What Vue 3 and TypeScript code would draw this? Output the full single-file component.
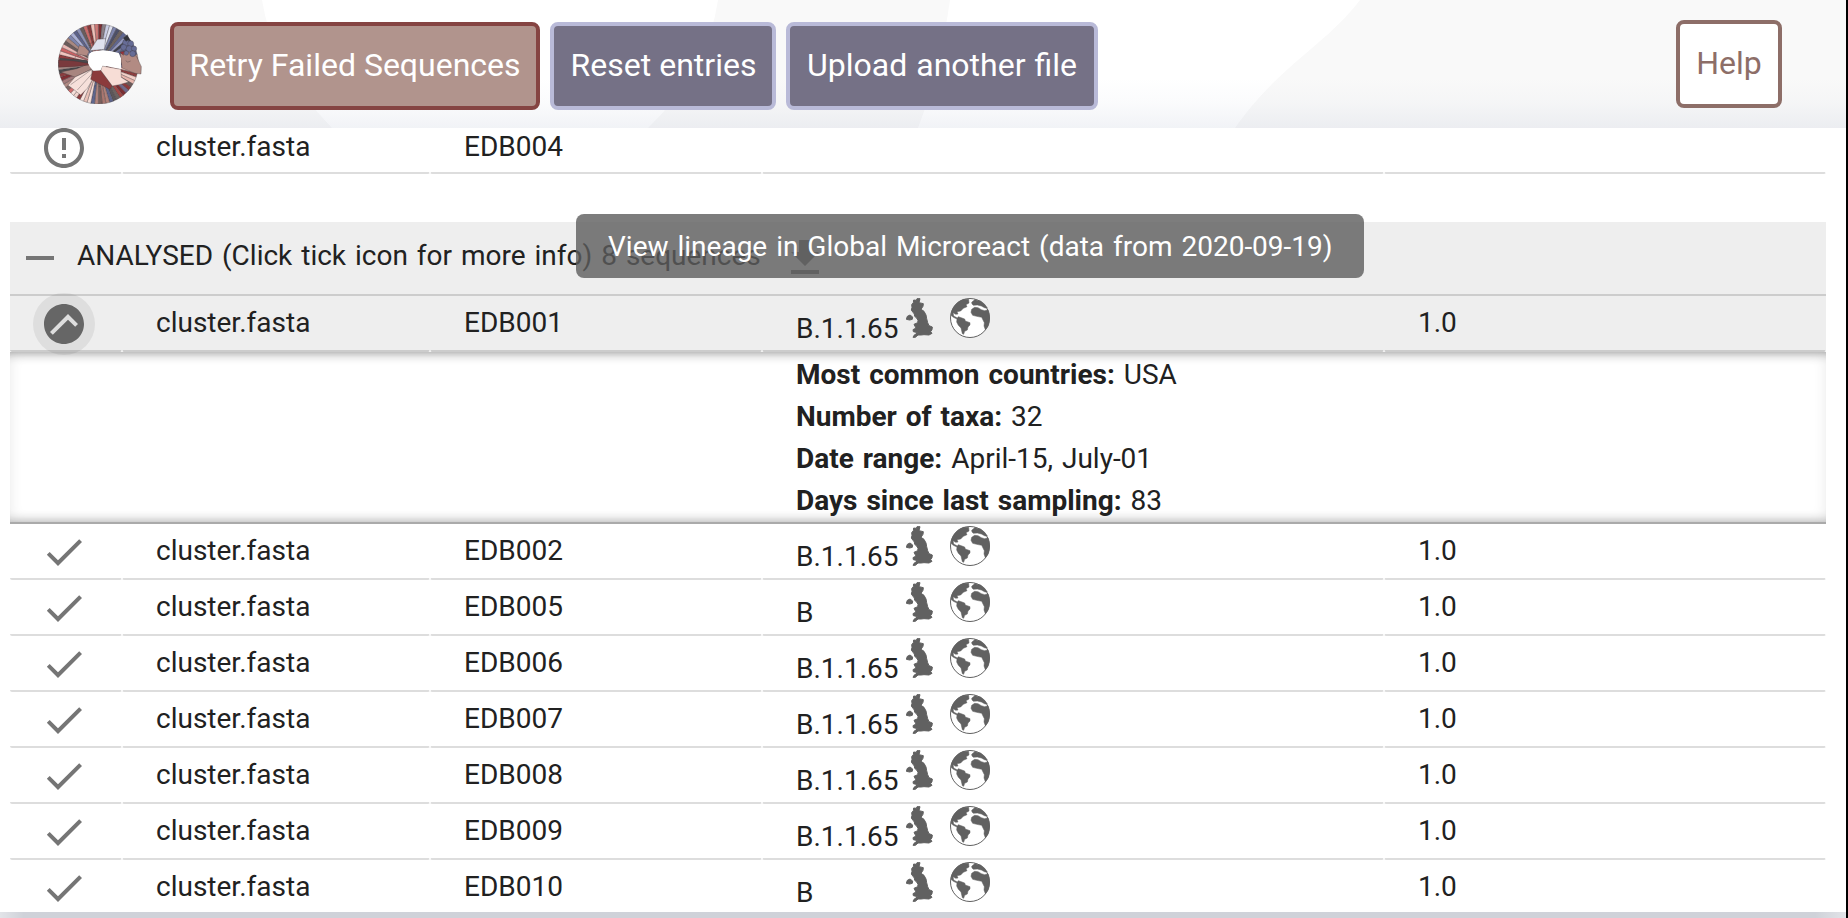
<script setup lang="ts">
interface Row {
  id: string
  lineage: string
  open?: boolean
}

const rows: Row[] = [
  { id: 'EDB001', lineage: 'B.1.1.65', open: true },
  { id: 'EDB002', lineage: 'B.1.1.65' },
  { id: 'EDB005', lineage: 'B' },
  { id: 'EDB006', lineage: 'B.1.1.65' },
  { id: 'EDB007', lineage: 'B.1.1.65' },
  { id: 'EDB008', lineage: 'B.1.1.65' },
  { id: 'EDB009', lineage: 'B.1.1.65' },
  { id: 'EDB010', lineage: 'B' },
]

const details = [
  { label: 'Most common countries:', value: 'USA' },
  { label: 'Number of taxa:', value: '32' },
  { label: 'Date range:', value: 'April-15, July-01' },
  { label: 'Days since last sampling:', value: '83' },
]

// Logo spokes: clockwise from twelve o'clock, [colour, inner radius]
const spokes: [string, number][] = [
  ['#7d2f33', 42], ['#8a7f86', 70], ['#c9cde4', 42], ['#dfe2f0', 42], ['#7f86ad', 44], ['#4d5068', 48],
  ['#6f6460', 50], ['#5f6690', 50], ['#9298c0', 55], ['#3c3f4c', 55], ['#6d739c', 55], ['#5d6389', 55],
  ['#767ca6', 60], ['#50557a', 60], ['#b38f87', 60], ['#b38f87', 60], ['#565b7c', 60], ['#8a8fb5', 60],
  ['#ecc3bb', 62], ['#8b3f40', 60], ['#f3d0c8', 52], ['#e8b7ae', 55], ['#6a5a5a', 60], ['#8b3a3c', 62],
  ['#70688a', 66], ['#7b2e33', 60], ['#a24645', 48], ['#6c6260', 60], ['#5c5659', 66], ['#5e648c', 70],
  ['#b08078', 60], ['#a9766f', 56], ['#7a5f5c', 68], ['#b38780', 60], ['#5f668e', 66], ['#f6ddd6', 40],
  ['#e9c1b8', 40], ['#f7e3de', 40], ['#8b3b3d', 74], ['#f3d4cd', 40], ['#f6dfd9', 40], ['#cf6d6c', 78],
  ['#7e6663', 50], ['#b08a83', 44], ['#a4797a', 40], ['#812f34', 60], ['#8c3d3f', 66], ['#4a4a4d', 40],
  ['#b0908a', 40], ['#7f6a67', 66], ['#c66a6a', 78], ['#8f3c3f', 62], ['#f1c4bf', 72], ['#c96365', 66],
  ['#e9b9b5', 60], ['#6b5b5a', 60], ['#a98880', 44], ['#7d84ac', 60], ['#a9afd4', 56], ['#5c628a', 60],
  ['#8c92b8', 56], ['#6a5c5b', 62], ['#c96a69', 66], ['#8a3a3c', 68], ['#efc0b8', 66], ['#cf7a78', 68],
]

function spokePath(i: number): string {
  const step = (Math.PI * 2) / spokes.length
  const a = i * step - Math.PI / 2
  const b = a + step
  const inner = spokes[i][1]
  const pt = (ang: number, r: number) => `${(175 + Math.cos(ang) * r).toFixed(1)} ${(162 + Math.sin(ang) * r).toFixed(1)}`
  return `M${pt(a, 25)}L${pt(a, 120)}A120 120 0 0 1 ${pt(b, 120)}L${pt(b, 25)}ZM${pt(a, inner)}L${pt(b, inner)}`
}
</script>

<template>
  <div class="page">
    <header class="bar">
      <svg class="backdrop" viewBox="0 0 1846 128" aria-hidden="true">
        <path d="M0 0H262Q272 66 332 128H0Z" />
        <path d="M718 0H950Q940 70 918 128H648Q708 70 718 0Z" />
        <path d="M1360 0H1846V128H1235C1280 64 1325 46 1360 0Z" />
      </svg>
      <svg class="logo" viewBox="54 42 252 240" aria-hidden="true">
        <g stroke="#3a3436" stroke-width="1">
          <path v-for="(s, i) in spokes" :key="i" :d="spokePath(i)" :fill="s[0]" />
          <path d="M150 122L172 88 197 86 193 118Z" fill="#dfe1ee" />
          <path d="M110 132L118 106 134 110 147 124 141 138Z" fill="#b28a83" />
          <path d="M62 186L110 176 150 160 154 178 105 201Z" fill="#a8857f" />
          <path d="M56 150L100 152 145 158 148 165 100 170 56 172Z" fill="#7a3a3d" />
          <path d="M60 145L140 151 146 160 100 152 58 150Z" fill="#4a4a4d" />
          <path d="M105 201L155 178 158 208 142 235 122 255 98 236 84 226Z" fill="#f6e0da" />
          <path d="M92 224L153 180 M112 240L157 190" fill="none" />
          <path d="M158 182L183 181 217 228 209 238 152 208Z" fill="#8b3b3c" />
          <path d="M186 168L243 178 244 202 266 216 238 224 217 228 183 182Z" fill="#f7ddd6" />
          <path d="M241 132L262 120 290 140 304 170 303 192 285 190 246 174Z" fill="#b28b83" />
          <path d="M257 152Q262 160 272 153" fill="none" />
          <g fill="#666c96">
            <circle cx="258" cy="98" r="10" /><circle cx="272" cy="101" r="9" />
            <circle cx="251" cy="112" r="9" /><circle cx="268" cy="117" r="10" />
            <circle cx="282" cy="116" r="8" /><circle cx="278" cy="131" r="9" /><circle cx="259" cy="129" r="7" />
          </g>
          <path d="M250 84L262 74 268 88 258 94Z" fill="#33343b" />
          <path d="M240 126L252 124 250 136Z" fill="#9b2f36" />
        </g>
        <path d="M145 142Q146 127 162 124L190 121 214 124 236 129 243 145 243 177 215 172 188 166 181 181 160 182 150 171 144 160Z" fill="#fff" />
      </svg>
      <button class="btn failed">Retry Failed Sequences</button>
      <button class="btn reset">Reset entries</button>
      <button class="btn upload">Upload another file</button>
      <button class="btn help">Help</button>
    </header>

    <main class="panel">
      <div class="row first">
        <div class="cell status">
          <svg class="icon" viewBox="0 0 24 24"><path d="M11 15h2v2h-2zm0-8h2v6h-2zm.99-5C6.47 2 2 6.48 2 12s4.47 10 9.99 10C17.52 22 22 17.52 22 12S17.52 2 11.99 2zM12 20c-4.42 0-8-3.58-8-8s3.58-8 8-8 8 3.58 8 8-3.58 8-8 8z" /></svg>
        </div>
        <div class="cell">cluster.fasta</div>
        <div class="cell">EDB004</div>
        <div class="cell"></div>
        <div class="cell"></div>
      </div>

      <div class="section">
        <span class="minus"></span>
        <span class="title">ANALYSED (Click tick icon for more info) 8 sequences</span>
        <svg class="icon download" viewBox="0 0 24 24"><path d="M19 9h-4V3H9v6H5l7 7 7-7zM5 18v2h14v-2H5z" /></svg>
      </div>

      <template v-for="r in rows" :key="r.id">
        <div class="row" :class="{ open: r.open }">
          <div class="cell status">
            <span v-if="r.open" class="halo">
              <svg class="icon turned" viewBox="0 0 24 24"><path d="M12 2C6.48 2 2 6.48 2 12s4.48 10 10 10 10-4.48 10-10S17.52 2 12 2zm-2 15l-5-5 1.41-1.41L10 14.17l7.59-7.59L19 8l-9 9z" /></svg>
            </span>
            <svg v-else class="icon" viewBox="0 0 24 24"><path d="M9 16.17L4.83 12l-1.42 1.41L9 19 21 7l-1.41-1.41z" /></svg>
          </div>
          <div class="cell">cluster.fasta</div>
          <div class="cell">{{ r.id }}</div>
          <div class="cell lineage">
            <span class="name">{{ r.lineage }}</span>
            <svg class="uk" viewBox="380 54 81 120"><path d="M403 60L411 61 413 56 422 56 419 68 432 71 431 79 425 88 434 94 440 105 442 116 445 128 449 137 459 141 458 149 454 155 458 160 449 165 434 164 425 165 416 165 408 172 401 172 404 166 415 158 402 155 401 149 410 144 407 139 404 133 415 128 416 121 412 114 406 109 405 102 401 97 396 90 398 82 397 74 402 68ZM384 109L392 105 400 111 399 118 391 120 381 118Z" /></svg>
            <svg class="globe" viewBox="630 528 120 120">
              <circle cx="690" cy="588" r="58.5" fill="#fff" stroke="#616161" stroke-width="3" />
              <path d="M633 580C634 558 650 538 671 532L686 532 687 543 678 548 681 554 670 559 662 567 651 569 654 576 647 577 639 572 641 582 652 588 655 584 666 588 674 591 676 597 690 602 690 609 684 615 682 624 674 628 671 637 667 635 663 618 655 610 650 600 651 591 640 586Z" />
              <path d="M695 541L704 533 722 537 734 547 742 558 735 558 724 552 712 549 700 550 696 546ZM695 562L704 556 714 557 724 563 734 566 744 563C750 578 750 598 744 613L736 623 732 612 733 602 725 586 710 583 698 580 693 571Z" />
            </svg>
          </div>
          <div class="cell">1.0</div>
        </div>
        <div v-if="r.open" class="details">
          <div v-for="d in details" :key="d.label" class="detail"><b>{{ d.label }}</b> {{ d.value }}</div>
        </div>
      </template>
      <div class="tooltip">View lineage in Global Microreact (data from 2020-09-19)</div>
    </main>
    <footer class="floor"></footer>
  </div>
</template>

<style>
html,
body {
  margin: 0;
  overflow: hidden;
}
</style>

<style scoped>
.page {
  box-sizing: border-box;
  width: 1848px;
  height: 918px;
  overflow: hidden;
  border-right: 2px solid #000;
  background: #fff;
  color: #212121;
  font-family: Roboto, "Liberation Sans", sans-serif;
  font-size: 28px;
  word-spacing: 2px;
  display: flex;
  flex-direction: column;
}
.bar {
  position: relative;
  flex: none;
  box-sizing: border-box;
  height: 128px;
  padding: 22px 64px 0 58px;
  display: flex;
  align-items: flex-start;
  gap: 10px;
}
.bar::after {
  content: "";
  position: absolute;
  inset: 78px 0 0;
  background: linear-gradient(rgba(70, 90, 140, 0), rgba(70, 90, 140, 0.025) 50%, rgba(70, 90, 140, 0.075));
}
.backdrop {
  position: absolute;
  inset: 0;
  width: 1846px;
  height: 128px;
  fill: #f9f9f9;
}
.logo {
  position: relative;
  z-index: 1;
  width: 84px;
  height: 80px;
  margin: 2px 18px 0 0;
}
.btn {
  position: relative;
  z-index: 1;
  box-sizing: border-box;
  height: 88px;
  padding: 0 0 2px;
  border: 4px solid #b9bad8;
  border-radius: 8px;
  background: #757186;
  color: #fff;
  font: 400 32px/76px Roboto, "Liberation Sans", sans-serif;
  white-space: nowrap;
}
.failed {
  width: 370px;
  border-color: #854442;
  background: #b1948d;
}
.reset {
  width: 226px;
  padding-left: 1px;
}
.upload {
  width: 312px;
  word-spacing: 1px;
}
.help {
  width: 106px;
  margin: -2px 0 0 auto;
  border-color: #8d6e68;
  background: #fff;
  color: #8d6e68;
}
.panel {
  position: relative;
  box-sizing: border-box;
  height: 784px;
  flex: none;
  padding: 0 20px 0 10px;
  overflow: hidden;
  background: #fff;
}
.row {
  display: grid;
  grid-template-columns: 112px 308px 332px 622px 442px;
  height: 56px;
}
.cell {
  box-sizing: border-box;
  height: 56px;
  padding-left: 33px;
  border: 0 solid transparent;
  border-width: 0 1px 2px;
  border-bottom-color: #ddd;
  border-radius: 0 0 2px 2px;
  line-height: 54px;
  white-space: nowrap;
}
.cell:first-child {
  border-left-width: 0;
}
.first {
  height: 94px;
}
.first .cell {
  height: 46px;
  line-height: 38px;
}
.open .cell {
  background: #eee;
  border-bottom-color: #ccc;
}
.status {
  padding-left: 30px;
}
.icon {
  display: block;
  width: 48px;
  height: 48px;
  fill: #757575;
}
.status .icon {
  margin-top: 4px;
}
.first .status .icon {
  margin-top: -4px;
}
.halo {
  position: relative;
  z-index: 1;
  display: flex;
  align-items: center;
  justify-content: center;
  width: 62px;
  height: 62px;
  margin: -3px 0 0 -7px;
  border-radius: 50%;
  background: rgba(0, 0, 0, 0.065);
}
.status .halo .turned {
  margin: 0;
  transform: rotate(180deg);
  fill: #666;
}
.lineage {
  display: flex;
  line-height: 66px;
}
.name {
  width: 110px;
}
.uk {
  width: 27px;
  height: 40px;
  margin: 2px 17px 0 0;
  fill: #616161;
  stroke: #616161;
  stroke-width: 3;
  stroke-linejoin: round;
}
.globe {
  width: 40px;
  height: 40px;
  margin-top: 2px;
  fill: #616161;
}
.globe path {
  stroke: #616161;
  stroke-width: 1.5;
}
.section {
  box-sizing: border-box;
  height: 74px;
  padding: 0 0 0 16px;
  border-bottom: 2px solid #ccc;
  background: #eee;
  display: flex;
}
.minus {
  width: 28px;
  height: 4px;
  margin: 34px 23px 0 0;
  background: #757575;
}
.title {
  width: 704px;
  line-height: 68px;
  white-space: nowrap;
}
.download {
  margin-top: 12px;
}
.details {
  box-sizing: border-box;
  height: 172px;
  padding: 1px 0 0 786px;
  border-bottom: 2px solid #aaa;
  box-shadow: inset 0 0 14px rgba(0, 0, 0, 0.09), inset 0 12px 12px -12px rgba(0, 0, 0, 0.42), inset 0 -12px 12px -12px rgba(0, 0, 0, 0.3);
}
.detail {
  height: 42px;
  line-height: 44px;
}
.tooltip {
  position: absolute;
  z-index: 2;
  left: 576px;
  top: 86px;
  box-sizing: border-box;
  width: 788px;
  height: 64px;
  padding-left: 32px;
  border-radius: 8px;
  background: rgba(93, 93, 93, 0.8);
  color: #fff;
  line-height: 66px;
  white-space: nowrap;
}
.floor {
  flex: 1;
  background: linear-gradient(90deg, rgba(255, 255, 255, 0.4), transparent 24px, transparent 1815px, rgba(255, 255, 255, 0.4)), #cfd2d9;
}
</style>
